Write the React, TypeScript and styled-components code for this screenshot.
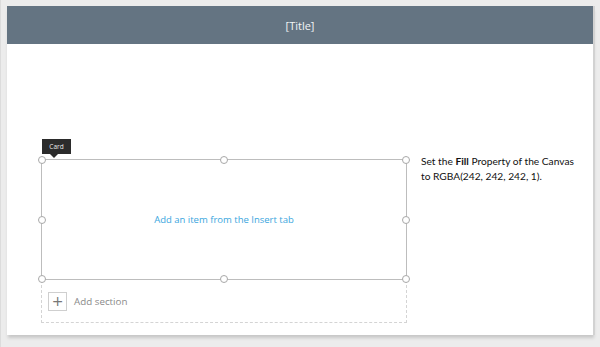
import React from "react";
import styled, { createGlobalStyle } from "styled-components";

const Global = createGlobalStyle`
  html, body { margin: 0; padding: 0; }
  body { width: 600px; height: 347px; overflow: hidden; background: #ececec; }
`;

const Frame = styled.div`
  width: 600px;
  height: 347px;
  box-sizing: border-box;
  padding: 6px 7px 0 6px;
  background: #ececec;
  border-left: 1px solid #dcdcdc;
`;

const Canvas = styled.div`
  width: 586px;
  height: 329px;
  background: #ffffff;
  display: flex;
  flex-direction: column;
  border-right: 2px solid #d2d2d2;
  box-shadow: 0 4px 3px -1px #c8c8c8;
`;

const Header = styled.div`
  height: 38px;
  background: #647482;
  display: flex;
  align-items: center;
  justify-content: center;
  color: #f2f4f6;
  font-family: "Open Sans", "Noto Sans", sans-serif;
  font-size: 11px;
`;

const Body = styled.div`
  display: flex;
  align-items: flex-start;
  padding: 115px 0 0 34px;
  gap: 14px;
`;

const CardColumn = styled.div`
  position: relative;
  width: 366px;
  display: flex;
  flex-direction: column;
`;

const Card = styled.div`
  position: relative;
  height: 121px;
  box-sizing: border-box;
  border: 1px solid #bdbdbd;
  display: flex;
  align-items: center;
  justify-content: center;
  color: #3aa6de;
  font-family: "Open Sans", "Noto Sans", sans-serif;
  font-size: 9.5px;
`;

const Handle = styled.span<{ $x: string; $y: string }>`
  position: absolute;
  left: ${(p) => p.$x};
  top: ${(p) => p.$y};
  width: 6px;
  height: 6px;
  margin: -4px 0 0 -4px;
  border: 1px solid #a8a8a8;
  border-radius: 50%;
  background: #fff;
`;

const Tooltip = styled.div`
  position: absolute;
  left: 1px;
  top: -20px;
  width: 29px;
  height: 15px;
  background: #2b2b2b;
  color: #eaeaea;
  font-family: "Open Sans", "Noto Sans", sans-serif;
  font-size: 6.5px;
  display: flex;
  align-items: center;
  justify-content: center;
  &::after {
    content: "";
    position: absolute;
    left: 8px;
    bottom: -4px;
    border-left: 4px solid transparent;
    border-right: 4px solid transparent;
    border-top: 4px solid #2b2b2b;
  }
`;

const Section = styled.div`
  height: 43px;
  box-sizing: border-box;
  border: 1px dashed #d4d4d4;
  border-top: none;
  display: flex;
  align-items: center;
  padding-left: 6px;
  gap: 7px;
`;

const PlusBox = styled.div`
  width: 19px;
  height: 19px;
  box-sizing: border-box;
  border: 1px solid #cfcfcf;
  display: flex;
  align-items: center;
  justify-content: center;
  color: #777;
  font-family: "DejaVu Sans", sans-serif;
  font-size: 14px;
  line-height: 1;
`;

const SectionLabel = styled.span`
  color: #8a8a8a;
  font-family: "Open Sans", "Noto Sans", sans-serif;
  font-size: 9.8px;
`;

const Note = styled.div`
  margin-top: -5px;
  width: 156px;
  color: #111;
  font-family: Lato, "Open Sans", sans-serif;
  font-size: 10.2px;
  line-height: 15px;
  b { font-weight: 700; }
`;

const handles: Array<[string, string]> = [
  ["0%", "0%"],
  ["50%", "0%"],
  ["100%", "0%"],
  ["0%", "50%"],
  ["100%", "50%"],
  ["0%", "100%"],
  ["50%", "100%"],
  ["100%", "100%"],
];

export default function App() {
  return (
    <>
      <Global />
      <Frame>
        <Canvas>
          <Header>[Title]</Header>
          <Body>
            <CardColumn>
              <Tooltip>Card</Tooltip>
              <Card>
                Add an item from the Insert tab
                {handles.map(([x, y], i) => (
                  <Handle key={i} $x={x} $y={y} />
                ))}
              </Card>
              <Section>
                <PlusBox>+</PlusBox>
                <SectionLabel>Add section</SectionLabel>
              </Section>
            </CardColumn>
            <Note>
              Set the <b>Fill</b> Property of the Canvas to RGBA(242, 242, 242, 1).
            </Note>
          </Body>
        </Canvas>
      </Frame>
    </>
  );
}
